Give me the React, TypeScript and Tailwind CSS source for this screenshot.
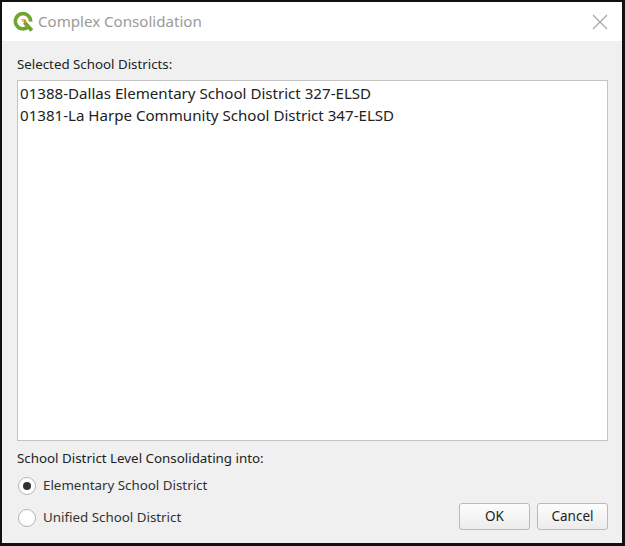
import React from 'react';

const QgisLogo: React.FC = () => (
  <svg width="22" height="22" viewBox="0 0 22 22" className="shrink-0">
    <path d="M15.5 15.5 A7.6 7.6 0 1 1 17.6 10.6" fill="none" stroke="#6fa52f" strokeWidth="3.6" />
    <path d="M11.5 11.5 L18.8 19.5" stroke="#6fa52f" strokeWidth="4" fill="none" />
    <path d="M8 8.2 L13 8.6 L12.6 13.2 Z" fill="#ee7913" />
    <circle cx="9.6" cy="9.6" r="1.2" fill="#f4c98a" />
  </svg>
);

const Radio: React.FC<{ label: string; checked?: boolean }> = ({ label, checked }) => (
  <div className="flex items-center gap-[7px]">
    <div className="w-[18px] h-[18px] rounded-full border border-[#b4b4b4] bg-white flex items-center justify-center">
      {checked && <div className="w-[8px] h-[8px] rounded-full bg-[#333333]"></div>}
    </div>
    <span className="text-[13.35px] text-[#333333] leading-none">{label}</span>
  </div>
);

const Button: React.FC<{ label: string }> = ({ label }) => (
  <button className="w-[71px] h-[27px] rounded-[3px] border border-[#b9b9b9] bg-gradient-to-b from-[#fdfdfd] to-[#ececec] text-[13.5px] text-[#222222] leading-none">
    {label}
  </button>
);

export default function App() {
  return (
    <div className="w-[625px] h-[546px] flex flex-col border-[2px] border-r-[3px] border-b-[3px] border-[#111111] bg-[#f0f0f0] text-[#222222] font-['Noto_Sans','Open_Sans',sans-serif] overflow-hidden">
      <div className="h-[39px] bg-white flex items-center pl-[11px] pr-[14px] shrink-0">
        <QgisLogo />
        <span className="ml-[3px] pt-[1px] text-[15.1px] text-[#9a9a9a] leading-none">Complex Consolidation</span>
        <svg width="16" height="16" viewBox="0 0 16 16" className="ml-auto">
          <path d="M1 1 L15 15 M15 1 L1 15" stroke="#a8a8a8" strokeWidth="1.2" fill="none" />
        </svg>
      </div>
      <div className="flex-1 flex flex-col pl-[15px] pr-[14px] pt-[15px] pb-[13px]">
        <div className="text-[13.3px] leading-[16px] mb-[8px]">Selected School Districts:</div>
        <div className="h-[361px] bg-white border border-[#c4c4c4] px-[2px] pt-[1px] text-[15.1px] leading-[22px] text-[#222222]">
          <div>01388-Dallas Elementary School District 327-ELSD</div>
          <div>01381-La Harpe Community School District 347-ELSD</div>
        </div>
        <div className="text-[13.35px] leading-[16px] mt-[9px]">School District Level Consolidating into:</div>
        <div className="flex items-end justify-between mt-[11px]">
          <div className="flex flex-col gap-[14px] pl-[1px] pb-[3px]">
            <Radio label="Elementary School District" checked />
            <Radio label="Unified School District" />
          </div>
          <div className="flex gap-[7px]">
            <Button label="OK" />
            <Button label="Cancel" />
          </div>
        </div>
      </div>
    </div>
  );
}
